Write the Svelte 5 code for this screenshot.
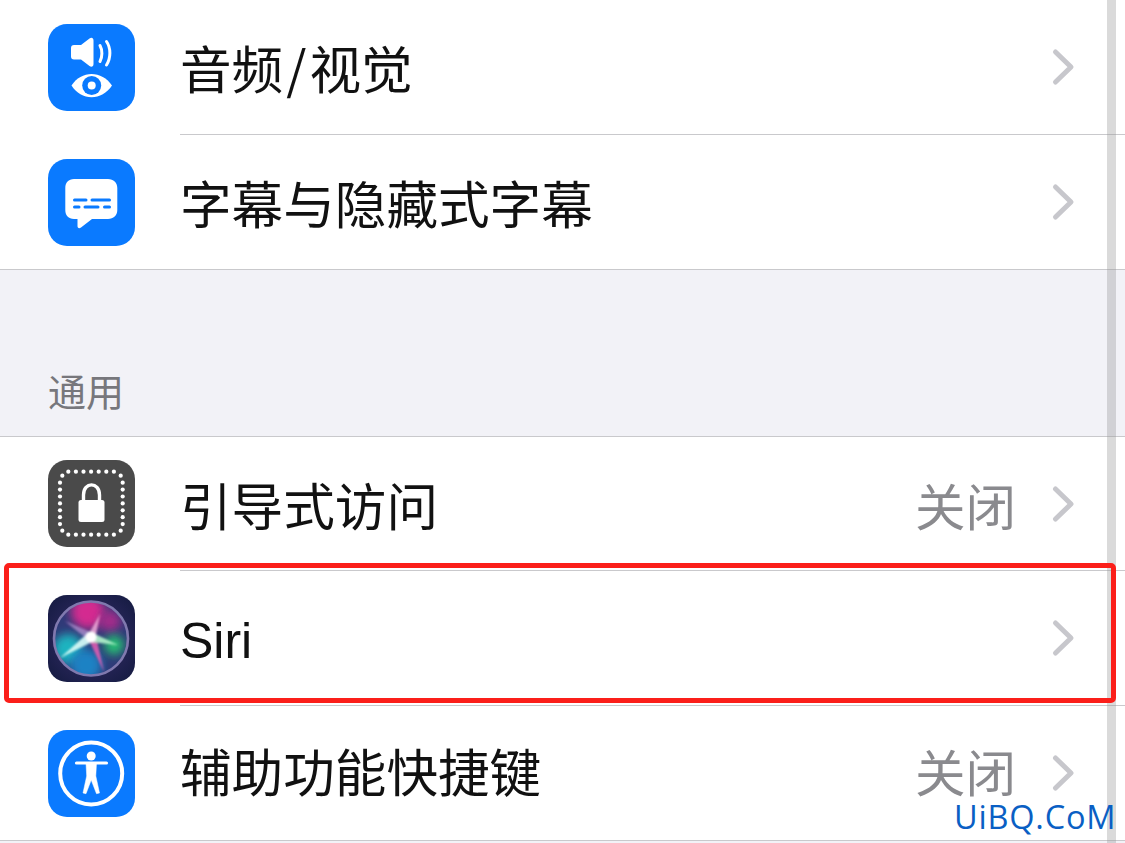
<script lang="ts">
	type Row = { label: string; icon: string; value?: string; latin?: boolean };

	const topRows: Row[] = [
		{ label: '音频/视觉', icon: 'av' },
		{ label: '字幕与隐藏式字幕', icon: 'captions' }
	];
	const generalRows: Row[] = [
		{ label: '引导式访问', icon: 'guided', value: '关闭' },
		{ label: 'Siri', icon: 'siri', latin: true },
		{ label: '辅助功能快捷键', icon: 'access', value: '关闭' }
	];

	// dots around the guided access frame
	const dotSteps = [0, 1, 2, 3, 4, 5, 6];
</script>

{#snippet rowIcon(name: string)}
	<svg class="icon" width="87" height="87" viewBox="0 0 87 87">
		{#if name === 'av'}
			<rect width="87" height="87" rx="19" fill="#0a7aff" />
			<path d="M23 24 C23 22 24 21 26 21 L33 21 L41.5 14.5 C43.5 13 45.5 14 45.5 16.5 L45.5 40 C45.5 42.5 43.5 43.5 41.5 42 L33 35.5 L26 35.5 C24 35.5 23 34.5 23 32.5 Z" fill="#fff" />
			<path d="M52 21.5 C54.5 26 54.5 33 52 37.5" fill="none" stroke="#fff" stroke-width="3" stroke-linecap="round" />
			<path d="M58.5 17.5 C63 24 63 34 58.5 41" fill="none" stroke="#fff" stroke-width="3" stroke-linecap="round" />
			<path d="M23.5 61.5 C33 46 54 46 64 61.5 C54 77 33 77 23.5 61.5 Z" fill="#fff" />
			<circle cx="43.7" cy="61.5" r="9.5" fill="#0a7aff" />
			<circle cx="43.7" cy="61.5" r="4" fill="#fff" />
		{:else if name === 'captions'}
			<rect width="87" height="87" rx="19" fill="#0a7aff" />
			<path d="M26 20 L60 20 C65.5 20 69.3 23.5 69.3 29 L69.3 51 C69.3 56.5 65.5 60 60 60 L44 60 L33 68.5 C31 70 29.5 69 29.5 67 L29.5 60 L26 60 C20.5 60 17.3 56.5 17.3 51 L17.3 29 C17.3 23.5 20.5 20 26 20 Z" fill="#fff" />
			<path d="M26.5 41 H38 M44 41 H61.5 M26.5 48 H31 M37 48 H50 M56.5 48 H61.5" stroke="#0a7aff" stroke-width="3" stroke-linecap="round" />
		{:else if name === 'guided'}
			<rect width="87" height="87" rx="19" fill="#4a4a4a" />
			{#each dotSteps as i}
				<circle cx={20.3 + i * 7.6} cy="11.7" r="2.1" fill="#fff" />
				<circle cx={20.3 + i * 7.6} cy="74.7" r="2.1" fill="#fff" />
				<circle cx="12" cy={22.7 + i * 6.9} r="2.1" fill="#fff" />
				<circle cx="74.7" cy={22.7 + i * 6.9} r="2.1" fill="#fff" />
			{/each}
			<circle cx="14.3" cy="15.7" r="2.1" fill="#fff" />
			<circle cx="72.7" cy="15.7" r="2.1" fill="#fff" />
			<circle cx="14.3" cy="70.7" r="2.1" fill="#fff" />
			<circle cx="72.7" cy="70.7" r="2.1" fill="#fff" />
			<path d="M35.5 42 L35.5 35 C35.5 21.5 51.5 21.5 51.5 35 L51.5 42" fill="none" stroke="#fff" stroke-width="3.4" />
			<rect x="30.5" y="40" width="26" height="22" rx="2.5" fill="#fff" />
		{:else if name === 'siri'}
			<defs>
				<radialGradient id="siriBg" cx="50%" cy="50%" r="70%">
					<stop offset="0" stop-color="#3a3070" />
					<stop offset="1" stop-color="#131a3f" />
				</radialGradient>
				<filter id="siriBlur" x="-30%" y="-30%" width="160%" height="160%"><feGaussianBlur stdDeviation="1.1" /></filter>
				<filter id="siriSoft" x="-80%" y="-80%" width="260%" height="260%"><feGaussianBlur stdDeviation="5" /></filter>
				<clipPath id="siriClip"><circle cx="43" cy="43.5" r="37" /></clipPath>
			</defs>
			<rect width="87" height="87" rx="19" fill="url(#siriBg)" />
			<circle cx="43" cy="43.5" r="37" fill="#2f3a78" />
			<g clip-path="url(#siriClip)">
				<circle cx="40" cy="17" r="17" fill="#d42a90" filter="url(#siriSoft)" />
				<circle cx="62" cy="26" r="11" fill="#a32b8a" filter="url(#siriSoft)" />
				<circle cx="20" cy="54" r="15" fill="#1bb4c0" filter="url(#siriSoft)" />
				<circle cx="38" cy="70" r="16" fill="#1a82c4" filter="url(#siriSoft)" />
				<circle cx="66" cy="50" r="10" fill="#25c073" filter="url(#siriSoft)" />
				<g filter="url(#siriBlur)">
					<path d="M12 63 L41 37 L46 46 Z" opacity="0.95" fill="#d2f8f4" />
					<path d="M39 42 L52 19 L47 45 Z" opacity="0.8" fill="#f6b4de" />
					<path d="M40 43 L56 77 L48 41 Z" opacity="0.85" fill="#e85cb4" />
					<path d="M43 37 L70 50 L43 47 Z" opacity="0.9" fill="#b4f4cc" />
					<path d="M17 26 L45 38 L40 45 Z" opacity="0.55" fill="#d0b0ec" />
					<circle cx="43" cy="42" r="5.5" fill="#fff" />
				</g>
			</g>
			<circle cx="43" cy="43.5" r="37" fill="none" stroke="#8079ae" stroke-width="2.6" />
		{:else}
			<rect width="87" height="87" rx="19" fill="#0a7aff" />
			<circle cx="43.2" cy="43.5" r="31" fill="none" stroke="#fff" stroke-width="4" />
			<circle cx="43.2" cy="26" r="4.5" fill="#fff" />
			<path d="M28.5 33 L58.5 33" stroke="#fff" stroke-width="3.2" stroke-linecap="round" />
			<path d="M38 33 L48.5 33 L47.8 46 L51.5 63 L48.5 63.7 L43.2 50 L38 63.7 L35 63 L38.7 46 Z" fill="#fff" stroke="#fff" stroke-width="0.5" stroke-linejoin="round" />
		{/if}
	</svg>
{/snippet}

{#snippet settingsRow(row: Row)}
	<div class="row">
		<div class="row__icon">{@render rowIcon(row.icon)}</div>
		<div class="row__body">
			<span class="row__label" class:row__label--latin={row.latin}>
				{#each row.label.split('/') as part, i}{#if i}<span class="slash">/</span>{/if}{part}{/each}
			</span>
			{#if row.value}<span class="row__value">{row.value}</span>{/if}
			<svg class="row__chevron" width="24" height="38" viewBox="0 0 24 38">
				<path d="M4.5 4 L20 19 L4.5 34" fill="none" stroke="#c7c7cc" stroke-width="5" stroke-linecap="round" stroke-linejoin="round" />
			</svg>
		</div>
	</div>
{/snippet}

<div class="screen">
	<section class="group group--top">
		{#each topRows as row}
			{@render settingsRow(row)}
		{/each}
	</section>

	<div class="section-head">通用</div>

	<section class="group group--general">
		{#each generalRows as row}
			{@render settingsRow(row)}
		{/each}
	</section>

	<div class="scrollbar"></div>
	<div class="highlight"></div>
	<div class="watermark">UiBQ.CoM</div>
</div>

<style>
	:global(body) {
		margin: 0;
		background: #f2f2f7;
	}

	.screen {
		position: relative;
		width: 1125px;
		height: 843px;
		overflow: hidden;
		background: #f2f2f7;
		font-family: 'Noto Sans CJK SC', 'Liberation Sans', sans-serif;
	}

	.group {
		background: #fff;
		border-top: 1px solid #c9c9cc;
		border-bottom: 1px solid #c9c9cc;
	}

	.group--top {
		border-top: none;
	}

	.row {
		display: flex;
		align-items: center;
		height: 134px;
		padding-left: 48px;
	}

	.row + .row {
		height: 135px;
	}

	.group--general .row:first-child {
		height: 133px;
	}

	.row__icon {
		display: flex;
		flex: none;
		width: 132px;
	}

	.row + .row .row__icon {
		margin-top: 2px;
	}

	.icon {
		display: block;
	}

	.row__body {
		flex: 1;
		display: flex;
		align-items: center;
		align-self: stretch;
		padding-right: 50px;
	}

	.row + .row .row__body {
		border-top: 1px solid #c9c9cc;
	}

	.row__label {
		flex: 1;
		font-size: 51.6px;
		line-height: 60px;
		color: #111;
	}

	.row__label--latin {
		margin-top: 6px;
		font-family: 'Liberation Sans', sans-serif;
		font-size: 50px;
	}

	.group--general .row:last-child .row__label,
	.group--general .row:last-child .row__value {
		margin-top: -6px;
	}

	.slash {
		margin: 0 3px;
	}

	.row__value {
		font-size: 50.5px;
		line-height: 60px;
		color: #8a8a8e;
		margin-right: 35px;
	}

	.section-head {
		height: 166px;
		box-sizing: border-box;
		padding: 98px 0 0 48px;
		font-size: 38px;
		line-height: 44px;
		color: #77777c;
	}

	/* overlays: scroll indicator, annotation box and watermark */
	.scrollbar {
		position: absolute;
		top: 0;
		bottom: 0;
		left: 1107px;
		width: 9px;
		background: rgba(150, 150, 150, 0.35);
	}

	.highlight {
		position: absolute;
		left: 4px;
		top: 563px;
		width: 1102px;
		height: 130px;
		border: 5px solid #fb1f1a;
		border-radius: 5px;
	}

	.watermark {
		position: absolute;
		left: 954px;
		top: 797px;
		font-family: 'Open Sans', sans-serif;
		font-size: 32.5px;
		line-height: 40px;
		letter-spacing: 0.8px;
		color: #0a5fc4;
	}
</style>
